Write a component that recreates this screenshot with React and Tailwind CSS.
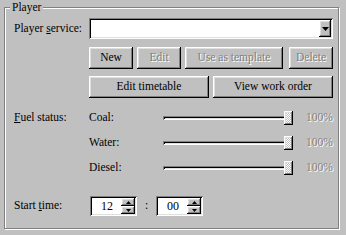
import React from "react";

const raised =
  "shadow-[inset_-1px_-1px_0_#000,inset_1px_1px_0_#fff,inset_-2px_-2px_0_#808080,inset_2px_2px_0_#dfdfdf]";
const sunken =
  "shadow-[inset_1px_1px_0_#808080,inset_-1px_-1px_0_#fff,inset_2px_2px_0_#000,inset_-2px_-2px_0_#dfdfdf]";
const disabledText = "text-[#808080] [text-shadow:1px_1px_0_#fff]";

function Btn({ children, w, disabled }) {
  return (
    <div
      className={`${w} h-[22px] flex items-center justify-center bg-[#c0c0c0] ${raised} ${
        disabled ? disabledText : "text-black"
      }`}
    >
      {children}
    </div>
  );
}

function Down({ size = 3 }) {
  return (
    <svg width={size * 2 + 1} height={size + 1} viewBox={`0 0 ${size * 2 + 1} ${size + 1}`}>
      <polygon points={`0,0 ${size * 2 + 1},0 ${size + 0.5},${size + 1}`} fill="#000" />
    </svg>
  );
}

function Up({ size = 2 }) {
  return (
    <svg width={size * 2 + 1} height={size + 1} viewBox={`0 0 ${size * 2 + 1} ${size + 1}`}>
      <polygon points={`0,${size + 1} ${size * 2 + 1},${size + 1} ${size + 0.5},0`} fill="#000" />
    </svg>
  );
}

function Spin({ value }) {
  return (
    <div className={`w-[47px] h-[20px] bg-white ${sunken} flex items-stretch p-[2px]`}>
      <div className="flex-1 flex items-center justify-center pl-[1px] text-[12px]">{value}</div>
      <div className="w-[14px] flex flex-col">
        <div className={`flex-1 bg-[#c0c0c0] ${raised} flex items-center justify-center`}>
          <Up />
        </div>
        <div className={`flex-1 bg-[#c0c0c0] ${raised} flex items-center justify-center`}>
          <Down size={2} />
        </div>
      </div>
    </div>
  );
}

function Slider({ label }) {
  return (
    <div className="flex items-center h-[25px]">
      <div className="w-[74px]">{label}</div>
      <div className="relative w-[130px] h-[4px] shadow-[inset_1px_1px_0_#808080,inset_-1px_-1px_0_#fff,inset_2px_2px_0_#000,inset_-2px_-2px_0_#dfdfdf]">
        <div
          className={`absolute right-[0px] top-[-5px] w-[9px] h-[14px] bg-[repeating-conic-gradient(#ffffff_0_25%,#c0c0c0_0_50%)] bg-[length:2px_2px] ${raised}`}
        />
      </div>
      <div className={`ml-[13px] ${disabledText}`}>100%</div>
    </div>
  );
}

export default function App() {
  return (
    <div className="w-[346px] h-[235px] bg-[#c0c0c0] pt-[7px] pl-[4px] [font-family:'Liberation_Serif',serif] text-[11.5px] leading-none text-black">
      <div className="relative w-[335px] h-[222px] border border-[#808080] shadow-[inset_1px_1px_0_#fff,1px_1px_0_#fff]">
        <span className="absolute left-[5px] top-[-6px] px-[2px] bg-[#c0c0c0]">Player</span>
        <div className="pl-[9px] pt-[10px]">
          <div className="flex items-center h-[21px]">
            <div className="w-[75px]">
              Player <span className="underline">s</span>ervice:
            </div>
            <div className={`w-[244px] h-[21px] bg-white ${sunken} flex justify-end items-center pr-[2px]`}>
              <div className={`w-[12px] h-[17px] bg-[#c0c0c0] ${raised} flex items-center justify-center`}>
                <Down size={3} />
              </div>
            </div>
          </div>

          <div className="ml-[75px] mt-[8px] flex">
            <Btn w="w-[44px]">New</Btn>
            <div className="w-[4px]" />
            <Btn w="w-[44px]" disabled>Edit</Btn>
            <div className="w-[4px]" />
            <Btn w="w-[98px]" disabled>Use as template</Btn>
            <div className="w-[6px]" />
            <Btn w="w-[44px]" disabled>Delete</Btn>
          </div>

          <div className="ml-[75px] mt-[7px] flex gap-[4px]">
            <Btn w="w-[120px]">Edit timetable</Btn>
            <Btn w="w-[120px]">View work order</Btn>
          </div>

          <div className="mt-[7px] flex">
            <div className="w-[75px] h-[25px] flex items-center">
              <span>
                <span className="underline">F</span>uel status:
              </span>
            </div>
            <div className="flex flex-col">
              <Slider label="Coal:" />
              <Slider label="Water:" />
              <Slider label="Diesel:" />
            </div>
          </div>

          <div className="mt-[16px] flex items-center h-[20px]">
            <div className="w-[76px]">
              Start <span className="underline">t</span>ime:
            </div>
            <Spin value="12" />
            <div className="w-[19px] text-center">:</div>
            <Spin value="00" />
          </div>
        </div>
      </div>
    </div>
  );
}
